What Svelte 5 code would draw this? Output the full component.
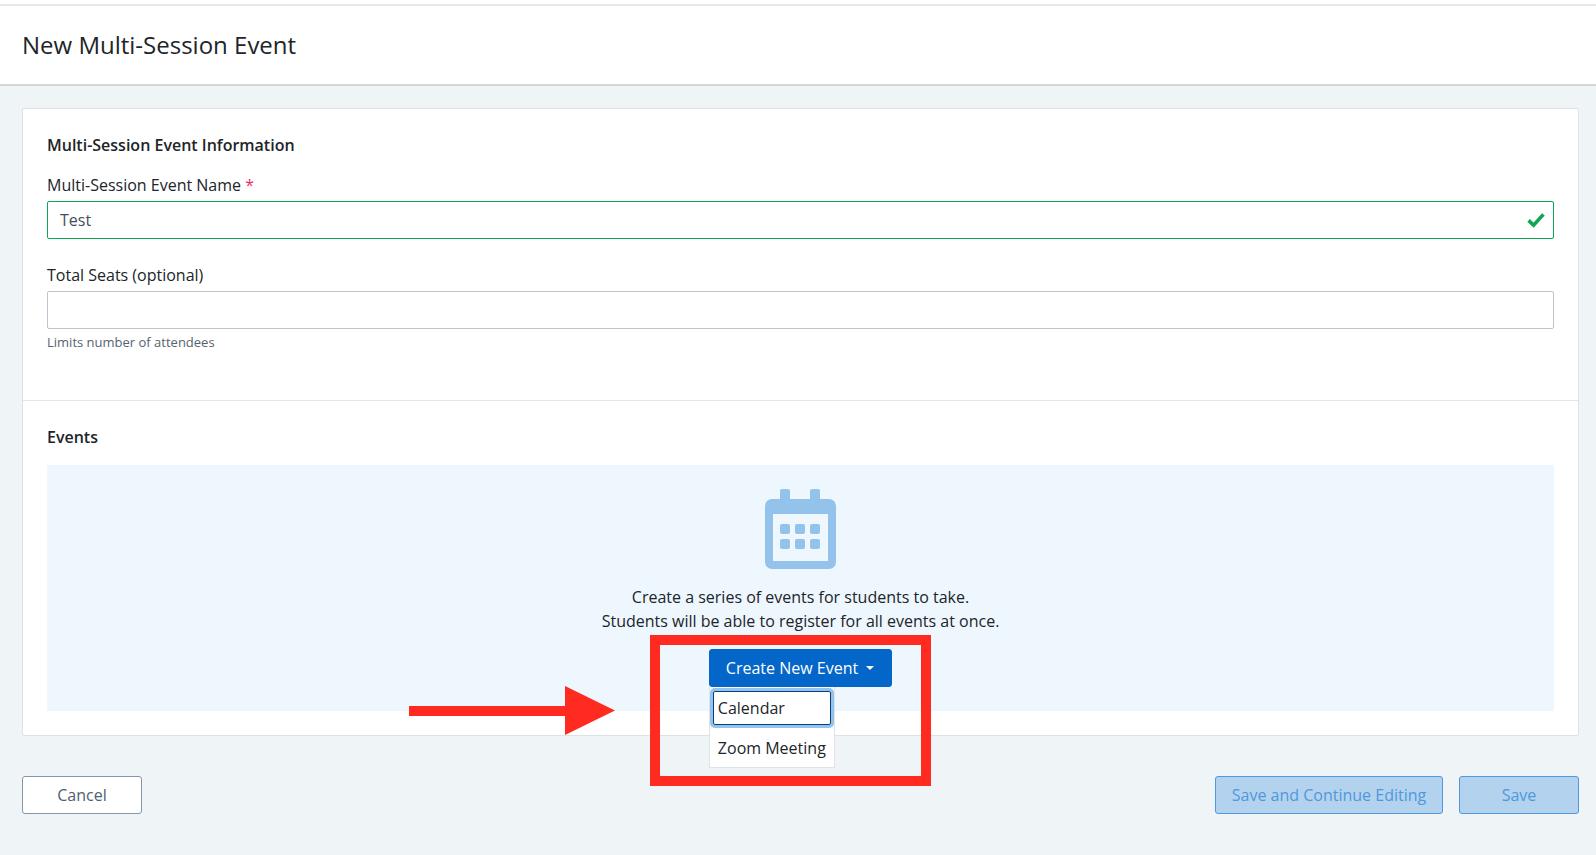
<script lang="ts">
	let eventName = $state('Test');
</script>

<div class="page">
	<header class="page-header">
		<h1>New Multi-Session Event</h1>
	</header>

	<main class="content">
		<div class="card">
			<section class="info">
				<h2>Multi-Session Event Information</h2>
				<div class="field">
					<label for="name">Multi-Session Event Name <span class="req">*</span></label>
					<div class="input-wrap">
						<input id="name" class="valid" type="text" bind:value={eventName} />
						<svg class="check" width="18" height="16" viewBox="0 0 18 16">
							<path d="M1.6 8.4 L6.6 13.2 L16.4 2.4" fill="none" stroke="#0ca750" stroke-width="3.6" />
						</svg>
					</div>
				</div>
				<div class="field">
					<label for="seats">Total Seats (optional)</label>
					<input id="seats" type="text" />
					<p class="help">Limits number of attendees</p>
				</div>
			</section>

			<section class="events">
				<h2>Events</h2>
				<div class="empty">
					<svg class="cal" width="71" height="80" viewBox="0 0 71 80">
						<path
							fill="#93c3ea"
							fill-rule="evenodd"
							d="M15 2a2 2 0 0 1 2-2h6a2 2 0 0 1 2 2v8h20V2a2 2 0 0 1 2-2h6a2 2 0 0 1 2 2v8h9a7 7 0 0 1 7 7v56a7 7 0 0 1-7 7H7a7 7 0 0 1-7-7V17a7 7 0 0 1 7-7h8zM8 25v47h55V25z"
						/>
						{#each [35, 50] as y}
							{#each [15, 30, 45] as x}
								<rect {x} {y} width="10" height="10" rx="2" fill="#93c3ea" />
							{/each}
						{/each}
					</svg>
					<p>Create a series of events for students to take.<br />Students will be able to register for all events at once.</p>
					<div class="dropdown">
						<button class="create">Create New Event<span class="caret"></span></button>
						<div class="menu">
							<div class="item focused">Calendar</div>
							<div class="item">Zoom Meeting</div>
						</div>
					</div>
				</div>
			</section>
		</div>

		<footer class="actions">
			<button class="btn cancel">Cancel</button>
			<div class="right">
				<button class="btn disabled wide">Save and Continue Editing</button>
				<button class="btn disabled">Save</button>
			</div>
		</footer>
	</main>

	<!-- red annotation drawn over the screenshot -->
	<div class="note-box"></div>
	<svg class="note-arrow" width="206" height="49" viewBox="0 0 206 49">
		<rect x="0" y="20" width="158" height="10" fill="#ff2a20" />
		<polygon points="156,0 206,24.5 156,49" fill="#ff2a20" />
	</svg>
</div>

<style>
	:global(body) {
		margin: 0;
		background: #eff4f7;
	}

	.page {
		position: relative;
		height: 855px;
		overflow: hidden;
		background: #eff4f7;
		color: #212529;
		font-family: 'Open Sans', 'Noto Sans', sans-serif;
		font-size: 16px;
		line-height: 24px;
	}

	.page-header {
		height: 78px;
		display: flex;
		align-items: center;
		background: #fff;
		border-top: 2px solid #e6e8ea;
		margin-top: 4px;
		border-bottom: 2px solid #d3d6d9;
		padding: 0 22px;
		box-shadow: 0 -4px 0 #fff;
	}

	h1 {
		margin: 0;
		font-size: 24px;
		font-weight: 400;
		line-height: 32px;
	}

	.content {
		padding: 22px 17px 0 22px;
	}

	.card {
		background: #fff;
		border: 1px solid #dfe2e4;
		border-radius: 2px;
	}

	h2 {
		margin: 0 0 16px;
		font-size: 16px;
		font-weight: 600;
		line-height: 24px;
	}

	.info {
		padding: 24px 24px 49px;
		border-bottom: 1px solid #e3e6e8;
	}

	.field + .field {
		margin-top: 24px;
	}

	label {
		display: block;
		margin-bottom: 4px;
	}

	.req {
		color: #e8325a;
	}

	.input-wrap {
		position: relative;
	}

	input {
		display: block;
		box-sizing: border-box;
		width: 100%;
		height: 38px;
		padding: 0 12px;
		border: 1px solid #bcc4d0;
		border-radius: 2px;
		outline: none;
		background: #fff;
		color: #444f5a;
		font: inherit;
	}

	input.valid {
		border-color: #0ca750;
	}

	.check {
		position: absolute;
		right: 9px;
		top: 11px;
	}

	.help {
		margin: 4px 0 0;
		font-size: 13px;
		line-height: 18px;
		color: #56636f;
	}

	.events {
		padding: 24px;
	}

	.empty {
		display: flex;
		flex-direction: column;
		align-items: center;
		padding: 24px;
		background: #eef6fe;
		text-align: center;
	}

	.cal {
		display: block;
		margin-bottom: 16px;
	}

	.empty p {
		margin: 0 0 16px;
	}

	.dropdown {
		position: relative;
	}

	.create {
		display: flex;
		align-items: center;
		box-sizing: border-box;
		height: 38px;
		padding: 0 17px 0 16px;
		border: 1px solid #0366c8;
		border-radius: 3px;
		background: #0366c8;
		color: #fff;
		font: inherit;
	}

	.caret {
		margin-left: 8px;
		border-top: 4px solid #fff;
		border-left: 4px solid transparent;
		border-right: 4px solid transparent;
	}

	.menu {
		position: absolute;
		left: 0;
		top: 38px;
		box-sizing: border-box;
		width: 126px;
		height: 81px;
		background: #fff;
		border: 1px solid #e0e3e6;
		border-top: none;
		text-align: left;
		white-space: nowrap;
	}

	.item {
		box-sizing: border-box;
		height: 40px;
		padding: 8px 8px;
	}

	.item.focused {
		position: relative;
		height: 34px;
		margin: 4px 3px 3px 3px;
		padding: 4px 4px;
		border: 1px solid #04407f;
		border-radius: 2px;
		box-shadow: 0 0 0 3px #93c3ea;
	}

	.actions {
		display: flex;
		justify-content: space-between;
		margin-top: 40px;
	}

	.right {
		display: flex;
		gap: 16px;
	}

	.btn {
		box-sizing: border-box;
		width: 120px;
		height: 38px;
		border-radius: 3px;
		font: inherit;
	}

	.cancel {
		background: #fff;
		border: 1px solid #8496ac;
		color: #4f6074;
	}

	.disabled {
		background: #b3d2ee;
		border: 1px solid #4f98dd;
		color: #4f98dd;
	}

	.wide {
		width: 228px;
	}

	.note-box {
		position: absolute;
		left: 650px;
		top: 635px;
		box-sizing: border-box;
		width: 281px;
		height: 151px;
		border: 10px solid #ff2a20;
	}

	.note-arrow {
		position: absolute;
		left: 409px;
		top: 686px;
	}
</style>
